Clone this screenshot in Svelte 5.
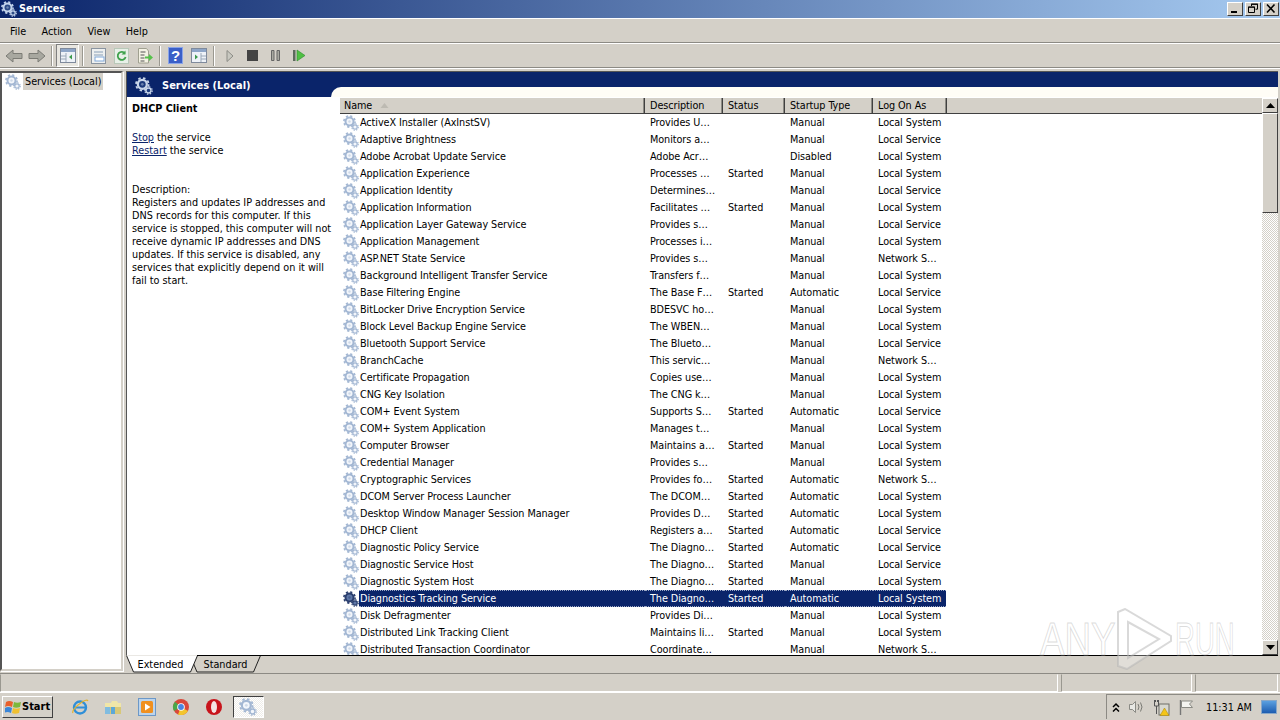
<script>
  const cols = ['Description', 'Status', 'Startup Type', 'Log On As'];
  const S = 'Started', M = 'Manual', A = 'Automatic', LS = 'Local System', LV = 'Local Service', NS = 'Network S…';
  const rows = [
    ['ActiveX Installer (AxInstSV)', 'Provides U…', '', M, LS],
    ['Adaptive Brightness', 'Monitors a…', '', M, LV],
    ['Adobe Acrobat Update Service', 'Adobe Acr…', '', 'Disabled', LS],
    ['Application Experience', 'Processes …', S, M, LS],
    ['Application Identity', 'Determines…', '', M, LV],
    ['Application Information', 'Facilitates …', S, M, LS],
    ['Application Layer Gateway Service', 'Provides s…', '', M, LV],
    ['Application Management', 'Processes i…', '', M, LS],
    ['ASP.NET State Service', 'Provides s…', '', M, NS],
    ['Background Intelligent Transfer Service', 'Transfers f…', '', M, LS],
    ['Base Filtering Engine', 'The Base F…', S, A, LV],
    ['BitLocker Drive Encryption Service', 'BDESVC ho…', '', M, LS],
    ['Block Level Backup Engine Service', 'The WBEN…', '', M, LS],
    ['Bluetooth Support Service', 'The Blueto…', '', M, LV],
    ['BranchCache', 'This servic…', '', M, NS],
    ['Certificate Propagation', 'Copies use…', '', M, LS],
    ['CNG Key Isolation', 'The CNG k…', '', M, LS],
    ['COM+ Event System', 'Supports S…', S, A, LV],
    ['COM+ System Application', 'Manages t…', '', M, LS],
    ['Computer Browser', 'Maintains a…', S, M, LS],
    ['Credential Manager', 'Provides s…', '', M, LS],
    ['Cryptographic Services', 'Provides fo…', S, A, NS],
    ['DCOM Server Process Launcher', 'The DCOM…', S, A, LS],
    ['Desktop Window Manager Session Manager', 'Provides D…', S, A, LS],
    ['DHCP Client', 'Registers a…', S, A, LV],
    ['Diagnostic Policy Service', 'The Diagno…', S, A, LV],
    ['Diagnostic Service Host', 'The Diagno…', S, M, LV],
    ['Diagnostic System Host', 'The Diagno…', S, M, LS],
    ['Diagnostics Tracking Service', 'The Diagno…', S, A, LS],
    ['Disk Defragmenter', 'Provides Di…', '', M, LS],
    ['Distributed Link Tracking Client', 'Maintains li…', S, M, LS],
    ['Distributed Transaction Coordinator', 'Coordinate…', '', M, NS]
  ];
</script>

{#snippet gear(size, tone, hub)}
  <svg class="gear" width={size} height={size} viewBox="0 0 16 16">
    <circle cx="6.5" cy="6.5" r="4" fill={hub} stroke={tone} stroke-width="2" />
    <circle cx="6.5" cy="6.5" r="5.6" fill="none" stroke={tone} stroke-width="1.6" stroke-dasharray="2.2 2.2" />
    <circle cx="6.5" cy="6.5" r="1.2" fill={tone} opacity=".45" />
    <circle cx="12" cy="12" r="2.2" fill={hub} stroke={tone} stroke-width="1.2" />
    <circle cx="12" cy="12" r="3.3" fill="none" stroke={tone} stroke-width="1.1" stroke-dasharray="1.3 1.3" />
  </svg>
{/snippet}

<div class="window">
  <header class="title">
    {@render gear(16, '#c4d4ec', '#2c4a86')}
    <span>Services</span>
    <div class="caption">
      <button class="cap" aria-label="Minimize"><svg width="12" height="11" viewBox="0 0 12 11"><rect x="2" y="8" width="6" height="2" fill="#000" /></svg></button>
      <button class="cap" aria-label="Restore"><svg width="12" height="11" viewBox="0 0 12 11"><path d="M4.500 3V1.200h6v5H8.500M1.500 4h6v5.500h-6z" fill="none" stroke="#000" /><path d="M4 1.200h7M1 4.200h7" stroke="#000" /></svg></button>
      <button class="cap" aria-label="Close"><svg width="12" height="11" viewBox="0 0 12 11"><path d="M2 1.500l7.500 8M9.500 1.500l-7.500 8" stroke="#000" stroke-width="1.6" /></svg></button>
    </div>
  </header>

  <nav class="menu">
    <span>File</span><span>Action</span><span>View</span><span>Help</span>
  </nav>

  <div class="toolbar">
    <div class="tool"><svg width="18" height="16" viewBox="0 0 18 16"><path d="M1 8l7-6v3.500h9v5H8V14z" fill="#a8a8a0" stroke="#7c7c76" /></svg></div>
    <div class="tool"><svg width="18" height="16" viewBox="0 0 18 16"><path d="M17 8l-7-6v3.500H1v5h9V14z" fill="#a8a8a0" stroke="#7c7c76" /></svg></div>
    <i class="sep"></i>
    <div class="tool pressed"><svg width="16" height="15" viewBox="0 0 16 15"><rect x=".5" y=".5" width="15" height="14" fill="#eef2f8" stroke="#7f8a9c" /><rect x="1" y="1" width="14" height="3" fill="#8ea6c8" /><path d="M6 5v9M1 8h5M1 11h5" stroke="#9aa8b8" /><path d="M12 6.500v5l-3-2.500z" fill="#3c9a4c" /></svg></div>
    <i class="sep"></i>
    <div class="tool"><svg width="15" height="16" viewBox="0 0 15 16"><rect x=".5" y=".5" width="14" height="15" fill="#eef0f0" stroke="#8a94a0" /><path d="M3 4h9M3 7h9" stroke="#8aa0b8" /><rect x="4" y="9" width="9" height="4" fill="#fff" stroke="#80a8d8" /></svg></div>
    <div class="tool"><svg width="15" height="16" viewBox="0 0 15 16"><rect x=".5" y=".5" width="14" height="15" fill="#e8f0e8" stroke="#b8c8b8" /><path d="M11 5.500a4 4 0 1 0 .6 3.500" fill="none" stroke="#3fa24c" stroke-width="1.800" /><path d="M11.500 2.500v4h-4z" fill="#3fa24c" /></svg></div>
    <div class="tool"><svg width="16" height="16" viewBox="0 0 16 16"><path d="M1.500.5h8l2 2.500v12h-10z" fill="#f4f2e4" stroke="#a0a090" /><path d="M3.500 4h5M3.500 7h4M3.500 10h4M3.500 13h4" stroke="#555" /><path d="M8 8.500h4V6l4 3.500-4 3.500v-2.500H8z" fill="#55c24a" /></svg></div>
    <i class="sep"></i>
    <div class="tool"><svg width="15" height="17" viewBox="0 0 15 17"><rect width="15" height="17" fill="#3a5fc8" /><rect x=".5" y=".5" width="14" height="16" fill="none" stroke="#8aa4e8" /><text x="7.500" y="14" text-anchor="middle" class="q">?</text></svg></div>
    <div class="tool"><svg width="16" height="15" viewBox="0 0 16 15"><rect x=".5" y=".5" width="15" height="14" fill="#eef2f8" stroke="#7f8a9c" /><rect x="1" y="1" width="14" height="3" fill="#8ea6c8" /><path d="M10 5v9M10 8h5M10 11h5" stroke="#9aa8b8" /><path d="M4 6.500v5l3-2.500z" fill="#3c9a4c" /></svg></div>
    <i class="sep"></i>
    <div class="tool"><svg width="10" height="14" viewBox="0 0 10 14"><path d="M2 1.500l6 5.500-6 5.500z" fill="#c8c8c0" stroke="#8c8c86" /></svg></div>
    <div class="tool"><svg width="11" height="11" viewBox="0 0 11 11"><rect width="11" height="11" fill="#444" /></svg></div>
    <div class="tool"><svg width="9" height="11" viewBox="0 0 9 11"><path d="M.5.500h2.500v10H.5zM6 .500h2.500v10H6z" fill="#a8a8a0" stroke="#666" /></svg></div>
    <div class="tool"><svg width="12" height="13" viewBox="0 0 12 13"><rect x="0" y="1" width="2.500" height="11" fill="#5c6a5c" /><path d="M4 1l8 5.500-8 5.500z" fill="#4fc043" stroke="#2d8a2d" stroke-width=".6" /></svg></div>
  </div>

  <main class="body">
    <aside class="tree">
      <div class="node">{@render gear(16, '#a3b7d3', '#f3f6fb')}<span class="node-label">Services (Local)</span></div>
    </aside>

    <div class="right">
      <section class="panel">
        <div class="band">
          <div class="band-tab">{@render gear(18, '#c9d6ea', '#1d3b7c')}<b>Services (Local)</b></div>
          <div class="band-rest"><div class="band-curve"></div></div>
        </div>

        <div class="content">
          <div class="desc">
            <h2>DHCP Client</h2>
            <p class="actions"><a href="#stop">Stop</a> the service<br /><a href="#restart">Restart</a> the service</p>
            <p class="text">Description:<br />Registers and updates IP addresses and<br />DNS records for this computer. If this<br />service is stopped, this computer will not<br />receive dynamic IP addresses and DNS<br />updates. If this service is disabled, any<br />services that explicitly depend on it will<br />fail to start.</p>
          </div>

          <div class="list">
            <div class="thead">
              <div class="th name">Name<svg width="9" height="5" viewBox="0 0 9 5"><path d="M4.500 0l4 5H.5z" fill="#bdbab2" /></svg></div>
              {#each cols as c}<div class="th">{c}</div>{/each}
              <div class="th-fill"></div>
            </div>
            <div class="tbody">
              {#each rows as r, i}
                <div class="row" class:sel={i === 28}>
                  <div class="cell first">
                    {@render gear(16, i === 28 ? '#2b3f6e' : '#a3b7d3', i === 28 ? '#5f78a8' : '#f3f6fb')}
                    <span class="label">{r[0]}</span>
                  </div>
                  <div class="cell">{r[1]}</div>
                  <div class="cell">{r[2]}</div>
                  <div class="cell">{r[3]}</div>
                  <div class="cell">{r[4]}</div>
                </div>
              {/each}
            </div>
          </div>

          <div class="scroll">
            <button class="sbtn" aria-label="Scroll up"><svg width="9" height="5" viewBox="0 0 9 5"><path d="M4.500 0l4.500 5H0z" /></svg></button>
            <div class="thumb"></div>
            <div class="track"></div>
            <button class="sbtn" aria-label="Scroll down"><svg width="9" height="5" viewBox="0 0 9 5"><path d="M4.500 5L9 0H0z" /></svg></button>
          </div>
        </div>
      </section>

      <div class="tabs">
        <div class="tabstrip">
          <svg class="tabshape" width="136" height="18" viewBox="0 0 136 18">
            <path d="M67.500 .5l5.500 0L66.500 16.500H127l7-16" fill="#d4d0c8" stroke="none" />
            <path d="M67 7.500l4 9.500h56.500l7-16.500" fill="none" stroke="#222" />
            <path d="M.5.5l7 16.500h57l7-16.500" fill="#fff" />
            <path d="M.5.5l7 16.500h57l7-16.500" fill="none" stroke="#222" />
            <path d="M71 .5h65" stroke="#000" />
          </svg>
          <div class="tab">Extended</div>
          <div class="tab">Standard</div>
        </div>
        <div class="tabline"></div>
      </div>
    </div>
  </main>

  <div class="status">
    <div class="pane grow"></div>
    <div class="pane mid"></div>
    <div class="pane end"></div>
  </div>

  <footer class="taskbar">
    <button class="start">
      <svg width="17" height="16" viewBox="0 0 17 16"><path d="M1 3q3-2 7 0l-1 5q-4-2-7 0z" fill="#e8602c" /><path d="M9 3q3 1.500 7 0l-1 5q-4 1.500-7 0z" fill="#7cb83c" /><path d="M0 9q3-2 7 0l-1 5q-4-2-7 0z" fill="#3a86d8" /><path d="M8 9q3 1.500 7 0l-1 5q-4 1.500-7 0z" fill="#f0c030" /></svg>
      <b>Start</b>
    </button>
    <div class="quick">
      <span class="qi"><svg width="18" height="18" viewBox="0 0 18 18"><circle cx="9" cy="9.500" r="6" fill="none" stroke="#2f8fd8" stroke-width="2.400" /><path d="M4 9.500h10" stroke="#2f8fd8" stroke-width="2" /><path d="M2 15q-2-3 9-11 5-3 6-1" fill="none" stroke="#e3b32d" stroke-width="1.200" /></svg></span>
      <span class="qi"><svg width="18" height="18" viewBox="0 0 18 18"><rect x="1" y="5" width="16" height="11" fill="#d8c878" /><path d="M1 5h6l1-2h5l1 2h3v4H1z" fill="#f0e6a8" /><rect x="7" y="9" width="4" height="7" fill="#5ca8d8" /><rect x="1" y="9" width="5" height="7" fill="#80bce0" /></svg></span>
      <span class="qi"><svg width="18" height="18" viewBox="0 0 18 18"><rect x=".5" y=".5" width="17" height="17" fill="#bcd4ec" stroke="#6c98c8" /><rect x="3" y="3" width="12" height="12" rx="1.500" fill="#f09020" /><path d="M7 5.500l5.500 3.500L7 12.500z" fill="#fff" /></svg></span>
      <span class="qi"><svg width="18" height="18" viewBox="0 0 18 18"><circle cx="9" cy="9" r="8" fill="#d9483a" /><path d="M9 9L2.100 13A8 8 0 0 1 3 3.700z" fill="#4aa84a" /><path d="M9 9l7 4A8 8 0 0 1 6 16.500z" fill="#f3c52e" /><circle cx="9" cy="9" r="3.800" fill="#fff" /><circle cx="9" cy="9" r="2.900" fill="#4a86e0" /></svg></span>
      <span class="qi"><svg width="18" height="18" viewBox="0 0 18 18"><circle cx="9" cy="9" r="8" fill="#c8141c" /><ellipse cx="9" cy="9" rx="3" ry="6" fill="#f4e4e4" /></svg></span>
    </div>
    <div class="task-btn">{@render gear(18, '#a3b7d3', '#f3f6fb')}</div>
    <div class="spacer"></div>
    <div class="tray">
      <svg class="t-chev" width="10" height="11" viewBox="0 0 10 11"><path d="M2 5l3-3 3 3M2 9.500l3-3 3 3" fill="none" stroke="#000" stroke-width="1.500" /></svg>
      <svg class="t-vol" width="17" height="16" viewBox="0 0 17 16"><path d="M1.500 5.500h3l3-3v11l-3-3h-3z" fill="#e8e8e4" stroke="#8a8a84" /><path d="M10 5q2 3 0 6M12.500 3.500q3 4.500 0 9" fill="none" stroke="#7a7a74" /></svg>
      <svg class="t-net" width="17" height="17" viewBox="0 0 17 17"><rect x="6" y="5" width="10" height="11" fill="#d8d8d0" stroke="#6e6e68" /><path d="M1.500 1v6h4V1M3.500 7v8M2.500 1v2M4.500 1v2" fill="none" stroke="#555" /><path d="M11.500 9l4.500 7.500H7z" fill="#f5c518" stroke="#a98400" stroke-width=".5" /></svg>
      <svg class="t-flag" width="16" height="17" viewBox="0 0 16 17"><path d="M2.500 1v15" stroke="#777" stroke-width="1.400" /><path d="M3.500 2h11l-3 3 3 3.500h-11z" fill="#f4f4f0" stroke="#8a8a84" /></svg>
      <span class="clock">11:31 AM</span>
      <span class="showdesk"></span>
    </div>
  </footer>

  <div class="mark" aria-hidden="true">
    <span class="any"><span>ANY</span></span>
    <svg width="58" height="62" viewBox="0 0 58 62"><path d="M3 4v54l9 3 44-28v-5L10 1z" fill="rgba(255,255,255,.3)" stroke="rgba(180,180,180,.5)" stroke-width="2" /><path d="M13 14l31 17-31 19z" fill="none" stroke="rgba(180,180,180,.5)" stroke-width="2" /></svg>
    <span class="run"><span>RUN</span></span>
  </div>
</div>

<style>
  :global(body) { margin: 0; background: #d4d0c8; }
  .window {
    position: relative;
    width: 1280px; height: 720px; overflow: hidden;
    display: flex; flex-direction: column;
    background: #d4d0c8; color: #000;
    font: 10.75px/13px "DejaVu Sans Condensed", "DejaVu Sans", sans-serif;
  }
  button { padding: 0; margin: 0; font: inherit; }
  .gear { display: block; flex: none; }

  .title {
    height: 19px; flex: none; box-sizing: border-box;
    display: flex; align-items: center; gap: 2px; padding: 0 2px 1px 1px;
    background: linear-gradient(90deg, #0a246a, #a6caf0);
    border-bottom: 1px solid #fff;
    color: #fff; font-weight: 700;
  }
  .caption { margin-left: auto; display: flex; gap: 2px; margin-right: -1px; }
  .cap {
    width: 16px; height: 14px; box-sizing: border-box;
    display: flex; align-items: center; justify-content: center;
    background: #d4d0c8; border: 1px solid; border-color: #fff #404040 #404040 #fff;
  }

  .menu {
    height: 24px; flex: none; box-sizing: border-box;
    display: flex; align-items: center; gap: 15.5px; padding: 1px 0 0 10px;
    border-bottom: 1px solid #8c8a84;
  }
  .toolbar {
    height: 25px; flex: none; box-sizing: border-box;
    display: flex; align-items: center; padding-left: 2px;
    border-top: 1px solid #fff; border-bottom: 1px solid #8c8a84;
  }
  .tool {
    width: 23px; height: 23px; box-sizing: border-box; flex: none;
    display: flex; align-items: center; justify-content: center;
  }
  .tool.pressed { border: 1px solid; border-color: #808080 #fff #fff #808080; background: #e8e6e0; }
  .sep { width: 2px; height: 20px; margin: 0 3px; flex: none; background: #9a9890; border-right: 1px solid #fff; box-sizing: border-box; }
  .q { font: 700 15px "Liberation Sans", sans-serif; fill: #fff; }

  .body {
    flex: 1; min-height: 0; display: flex; gap: 3px;
    padding: 2px 2px 0 0; border-top: 1px solid #fff;
  }
  .tree {
    width: 123px; flex: none; box-sizing: border-box; margin-bottom: 2px;
    background: #fff; border: 2px solid; border-color: #555 #d4d0c8 #d4d0c8 #555;
    box-shadow: 1px 1px 0 #fff;
  }
  .node { display: flex; align-items: center; gap: 2px; padding: 0 0 0 3px; height: 17px; }
  .node-label { background: #d4d0c8; padding: 2px 2px; white-space: nowrap; }

  .right { flex: 1; min-width: 0; display: flex; flex-direction: column; }
  .panel {
    flex: 1; min-height: 0; display: flex; flex-direction: column;
    background: #fff; border-top: 1px solid #555; border-left: 1px solid #555;
  }
  .band { display: flex; height: 25px; flex: none; }
  .band-tab {
    width: 204px; flex: none; box-sizing: border-box; display: flex; align-items: center; gap: 9px; padding: 2px 0 0 8px;
    background: #0a246a; color: #fff; font-size: 11px;
  }
  .band-rest { flex: 1; background: #0a246a; }
  .band-curve { height: 10px; margin-top: 15px; background: #fffdf6; border-top-left-radius: 10px; }

  .content { flex: 1; min-height: 0; display: flex; }
  .desc { width: 213px; flex: none; box-sizing: border-box; padding: 5px 4px 0 5px; white-space: nowrap; }
  h2 { margin: 0; font-size: inherit; line-height: 13px; font-weight: 700; }
  p { margin: 0; }
  .actions { margin-top: 16px; }
  .text { margin-top: 26px; }
  a { color: #0a246a; text-decoration: underline; }

  .list { flex: 1; min-width: 0; display: flex; flex-direction: column; padding-top: 1px; letter-spacing: -.07px; }
  .thead {
    display: grid; grid-template-columns: 305px 78px 62px 88px 74px 1fr;
    height: 16px; flex: none; box-sizing: border-box; background: #d4d0c8; border-bottom: 1px solid #404040;
  }
  .th {
    display: flex; align-items: center; gap: 8px; padding-left: 5px;
    box-sizing: border-box; border-right: 1px solid #404040; box-shadow: inset -1px 0 0 #8c8a84;
  }
  .th.name { padding-left: 4px; }
  .tbody { flex: 1; min-height: 0; overflow: hidden; }
  .row { display: grid; grid-template-columns: 305px 78px 62px 88px 73px; width: 606px; height: 17px; }
  .cell { display: flex; align-items: center; padding-left: 5px; white-space: nowrap; overflow: hidden; }
  .cell.first { padding-left: 3px; gap: 0; overflow: visible; }
  .label { padding: 0 1px; line-height: 15px; }
  .row.sel .label, .row.sel .cell:not(.first) {
    background: #0a246a; color: #fff;
    box-sizing: border-box; border-block: 1px dotted #9aa6c4;
  }
  .row.sel .label { flex: 1; height: 17px; line-height: 15px; }

  .scroll { width: 16px; flex: none; display: flex; flex-direction: column; padding-top: 1px; }
  .sbtn {
    height: 15px; flex: none; display: flex; align-items: center; justify-content: center;
    background: #d4d0c8; border: 1px solid; border-color: #fff #404040 #404040 #fff;
  }
  .thumb {
    height: 100px; flex: none; box-sizing: border-box;
    background: #d4d0c8; border: 1px solid; border-color: #fff #404040 #404040 #fff;
  }
  .track { flex: 1; background: repeating-conic-gradient(#d4d0c8 0 25%, #fff 0 50%) 0 0 / 2px 2px; }

  .tabs { height: 18px; flex: none; display: flex; }
  .tabstrip { position: relative; display: flex; width: 136px; flex: none; padding-left: 2px; box-sizing: border-box; }
  .tabshape { position: absolute; left: 0; top: 0; }
  .tab {
    position: relative; width: 65px; flex: none;
    display: flex; align-items: center; justify-content: center; height: 18px; padding-top: 1px; box-sizing: border-box;
  }
  .tabline { flex: 1; height: 1px; background: #000; }

  .status {
    height: 20px; flex: none; box-sizing: border-box; display: flex; gap: 3px; padding-right: 2px;
    border-top: 1px solid #8c8a84; border-bottom: 1px solid #fff;
  }
  .pane { border: 1px solid; border-color: transparent #fff #fff #9a9890; box-sizing: border-box; }
  .pane.grow { flex: 1; }
  .pane.mid { width: 131px; }
  .pane.end { width: 83px; }

  .taskbar { height: 27px; flex: none; display: flex; align-items: center; padding: 0 0 0 2px; }
  .start {
    width: 51px; height: 22px; box-sizing: border-box;
    display: flex; align-items: center; gap: 0; padding-left: 2px;
    font-size: 11px;
    background: #d4d0c8; border: 1px solid; border-color: #fff #404040 #404040 #fff;
  }
  .quick { display: flex; margin-left: 10px; }
  .qi { width: 33.600px; flex: none; display: flex; justify-content: center; }
  .task-btn {
    width: 31px; height: 22px; box-sizing: border-box; margin-left: 2px;
    display: flex; align-items: center; justify-content: center;
    border: 1px solid; border-color: #404040 #fff #fff #404040;
    background: repeating-conic-gradient(#fff 0 25%, #eeece8 0 50%) 0 0 / 2px 2px;
  }
  .spacer { flex: 1; }
  .tray {
    width: 174px; height: 25px; box-sizing: border-box; display: flex; align-items: center;
    border-left: 1px solid #8c8a84; border-top: 1px solid #8c8a84; padding-left: 4px;
  }
  .t-vol { margin-left: 7px; }
  .t-net { margin-left: 8px; }
  .t-flag { margin-left: 8px; }
  .clock { margin-left: 12px; white-space: nowrap; }
  .showdesk {
    width: 14px; height: 12px; margin-left: 9px;
    background: linear-gradient(180deg, #5aa0e0, #1c5cb0);
    border: 1px solid #88a8c8;
  }

  .mark {
    position: absolute; left: 1040px; top: 608px;
    display: flex; align-items: center; pointer-events: none;
    font: 400 46px/62px "Liberation Sans", sans-serif;
    color: rgba(255, 255, 255, .35);
    -webkit-text-stroke: 1px rgba(175, 175, 175, .45);
  }
  .any { width: 72px; flex: none; margin-right: 3px; }
  .run { width: 62px; flex: none; margin-left: 2px; }
  .any span, .run span { display: inline-block; transform-origin: 0 50%; }
  .any span { transform: scaleX(.8); }
  .run span { transform: scaleX(.6); }
</style>
